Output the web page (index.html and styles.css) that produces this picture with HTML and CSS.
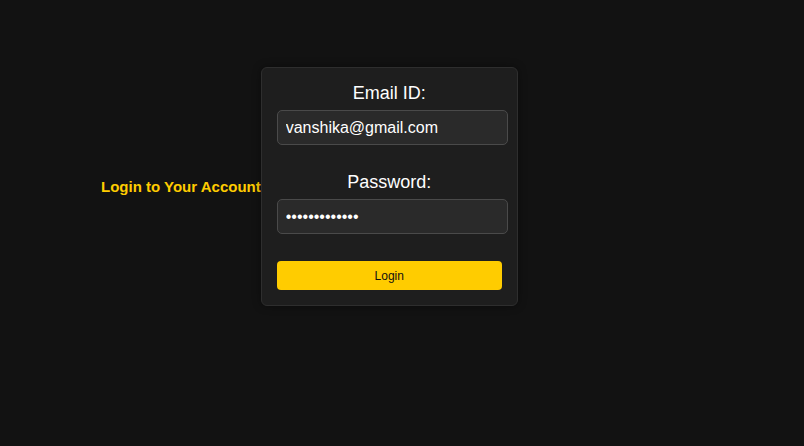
FILE: index.html
```html
<!DOCTYPE html>
<html>
<head>
<meta charset="utf-8">
<link rel="stylesheet" href="styles.css">
</head>
<body>
<div class="page">
  <h2 class="title">Login to Your Account</h2>
  <form class="card">
    <label class="label">Email ID:</label>
    <input class="field" type="text" value="vanshika@gmail.com">
    <label class="label label-pw">Password:</label>
    <input class="field" type="password" value="vanshika12345">
    <button class="btn" type="button">Login</button>
  </form>
</div>
</body>
</html>
```
FILE: styles.css
```css
html, body {
  margin: 0;
  padding: 0;
  background: #121212;
  height: 100%;
}
body {
  font-family: "Liberation Sans", Arial, sans-serif;
}
.page {
  display: flex;
  align-items: center;
  padding: 67px 0 0 101px;
}
.title {
  margin: 0;
  font-size: 15px;
  font-weight: bold;
  color: #ffcc00;
}
.card {
  width: 225px;
  padding: 15px;
  background: #1e1e1e;
  border: 1px solid #2e2e2e;
  border-radius: 6px;
  display: flex;
  flex-direction: column;
  box-shadow: 0 0 8px rgba(0,0,0,0.4);
}
.label {
  display: block;
  text-align: center;
  color: #ffffff;
  font-size: 18px;
  line-height: 21px;
  margin-bottom: 6px;
}
.label-pw {
  margin-top: 27px;
}
.field {
  box-sizing: border-box;
  width: 231px;
  height: 35px;
  padding: 0 8px;
  background: #2a2a2a;
  border: 1px solid #4a4a4a;
  border-radius: 5px;
  color: #ffffff;
  font-family: "Liberation Sans", Arial, sans-serif;
  font-size: 16px;
  outline: none;
}
.btn {
  margin-top: 27px;
  width: 225px;
  height: 29px;
  background: #ffcc00;
  border: none;
  border-radius: 4px;
  color: #111;
  font-family: "Liberation Sans", Arial, sans-serif;
  font-size: 12px;
  cursor: pointer;
}
```
